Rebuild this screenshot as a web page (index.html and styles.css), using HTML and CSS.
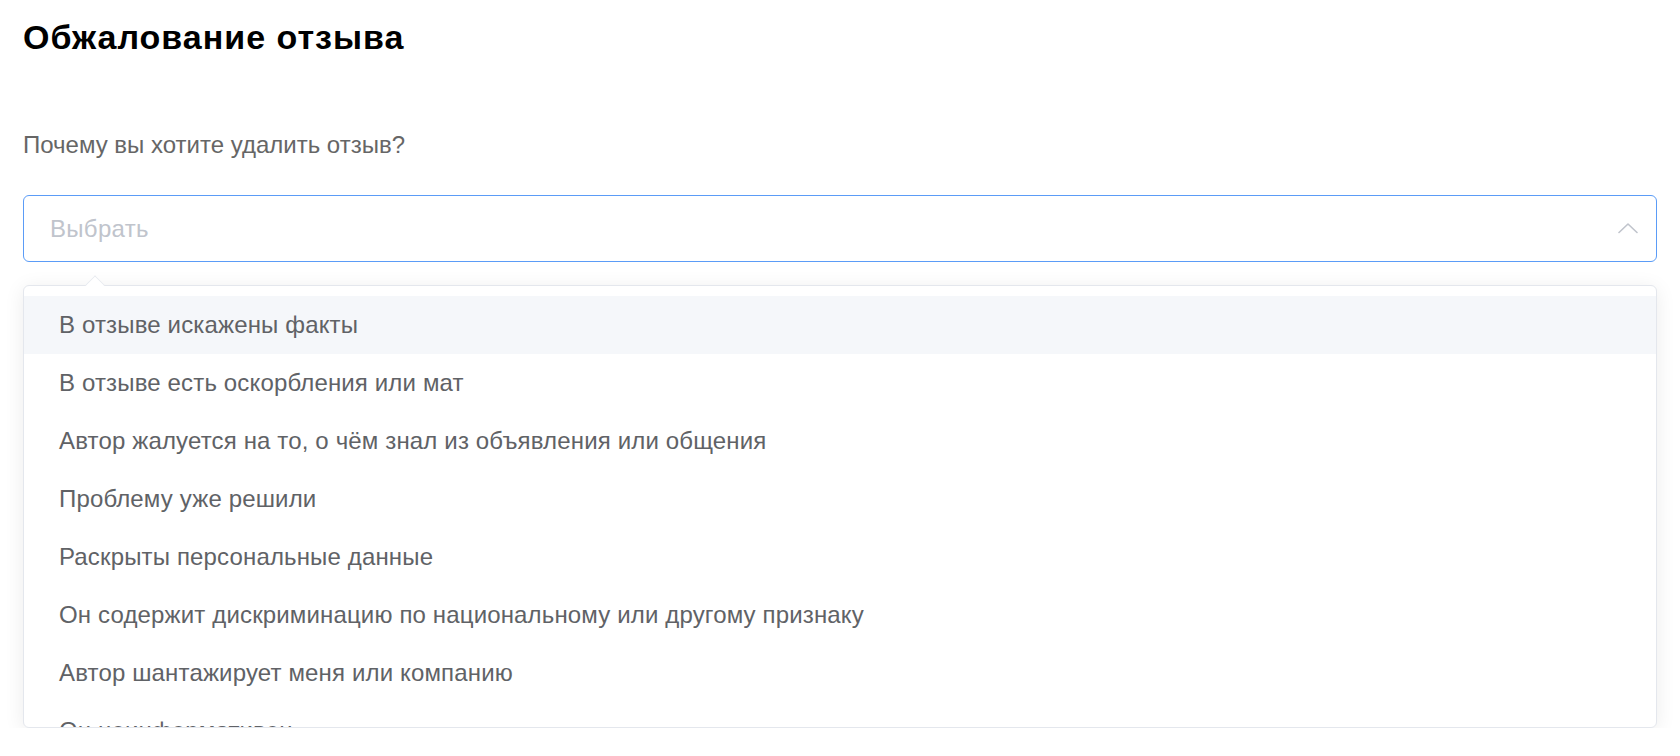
FILE: index.html
```html
<!DOCTYPE html>
<html lang="ru">
<head>
<meta charset="utf-8">
<title>Обжалование отзыва</title>
<link rel="stylesheet" href="styles.css">
</head>
<body>
<main class="page">
  <h1 class="title">Обжалование отзыва</h1>
  <p class="label">Почему вы хотите удалить отзыв?</p>
  <div class="select">
    <div class="input">
      <span class="placeholder">Выбрать</span>
      <svg class="chevron" width="20" height="12" viewBox="0 0 20 12" aria-hidden="true">
        <path d="M1 10.5 L10 2 L19 10.5" fill="none" stroke="#c0c4cc" stroke-width="1.6" stroke-linecap="round" stroke-linejoin="round"/>
      </svg>
    </div>
    <div class="dropdown">
      <span class="caret"></span>
      <ul class="list">
        <li class="item hover">В отзыве искажены факты</li>
        <li class="item">В отзыве есть оскорбления или мат</li>
        <li class="item">Автор жалуется на то, о чём знал из объявления или общения</li>
        <li class="item">Проблему уже решили</li>
        <li class="item">Раскрыты персональные данные</li>
        <li class="item">Он содержит дискриминацию по национальному или другому признаку</li>
        <li class="item">Автор шантажирует меня или компанию</li>
        <li class="item">Он неинформативен</li>
      </ul>
    </div>
  </div>
</main>
</body>
</html>
```

FILE: styles.css
```css
* { box-sizing: border-box; }
html, body { margin: 0; padding: 0; background: #fff; }
body {
  font-family: "Liberation Sans", Arial, Helvetica, sans-serif;
  color: #606266;
}
.page {
  padding: 18px 23px 0 23px;
  width: 1680px;
}
.title {
  margin: 0;
  font-size: 34px;
  line-height: 38px;
  font-weight: 700;
  letter-spacing: 1px;
  color: #000;
}
.label {
  margin: 75px 0 0 0;
  font-size: 24px;
  line-height: 28px;
  color: #666;
}
.select {
  margin-top: 36px;
  width: 1634px;
  position: relative;
}
.input {
  height: 67px;
  border: 1.5px solid #5b9cf7;
  border-radius: 6px;
  display: flex;
  align-items: center;
  justify-content: space-between;
  padding: 0 18px 0 26px;
}
.placeholder {
  font-size: 24px;
  letter-spacing: 0.3px;
  color: #c0c4cc;
}
.chevron { display: block; margin-top: -2px; }
.dropdown {
  margin-top: 23px;
  height: 443px;
  border: 1px solid #e4e7ed;
  border-radius: 6px;
  background: #fff;
  box-shadow: 0 3px 20px rgba(0, 0, 0, 0.08);
  position: relative;
}
.caret {
  position: absolute;
  left: 62px;
  top: -10px;
  width: 18px;
  height: 18px;
  background: #fff;
  border-left: 1px solid #e4e7ed;
  border-top: 1px solid #e4e7ed;
  transform: rotate(45deg) scale(0.75, 0.75);
  transform-origin: center;
}
.list {
  list-style: none;
  margin: 0;
  padding: 10px 0 0 0;
  height: 100%;
  overflow: hidden;
  border-radius: 6px;
}
.item {
  height: 58px;
  line-height: 58px;
  padding-left: 35px;
  font-size: 24px;
  letter-spacing: 0.15px;
  color: #606266;
  white-space: nowrap;
}
.item.hover { background: #f5f7fa; }
```
